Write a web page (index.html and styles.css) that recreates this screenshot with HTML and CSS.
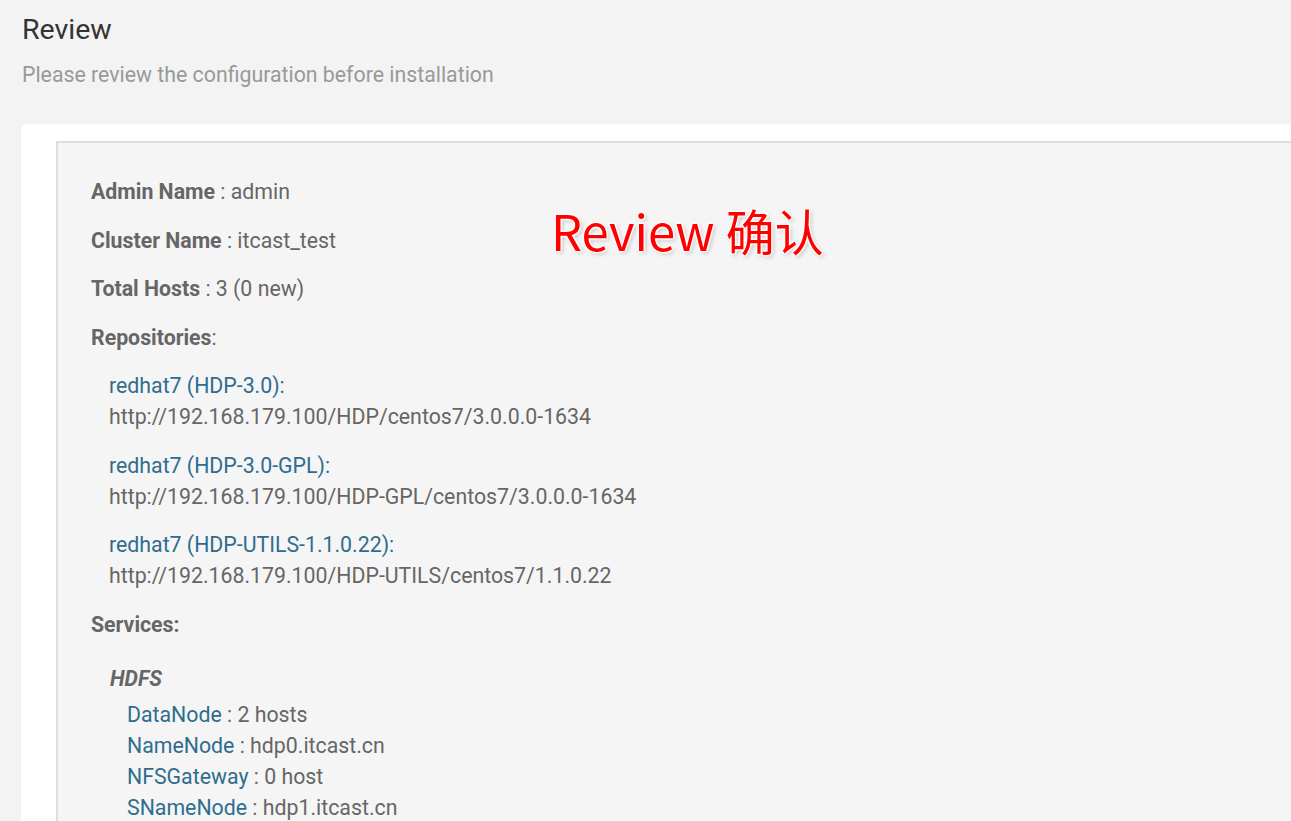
FILE: index.html
```html
<!DOCTYPE html>
<html lang="en">
<head>
<meta charset="utf-8">
<title>Review</title>
<link rel="stylesheet" href="styles.css">
</head>
<body>
<div class="page">
  <h1 class="page-title">Review</h1>
  <p class="page-subtitle">Please review the configuration before installation</p>

  <div class="card">
    <div class="summary">
      <p class="row"><b>Admin Name</b> : admin</p>
      <p class="row"><b>Cluster Name</b> : itcast_test</p>
      <p class="row"><b>Total Hosts</b> : 3 (0 new)</p>
      <p class="row"><b>Repositories</b>:</p>

      <div class="repos">
        <div class="repo">
          <div class="link">redhat7 (HDP-3.0):</div>
          <div>http://192.168.179.100/HDP/centos7/3.0.0.0-1634</div>
        </div>
        <div class="repo">
          <div class="link">redhat7 (HDP-3.0-GPL):</div>
          <div>http://192.168.179.100/HDP-GPL/centos7/3.0.0.0-1634</div>
        </div>
        <div class="repo">
          <div class="link">redhat7 (HDP-UTILS-1.1.0.22):</div>
          <div>http://192.168.179.100/HDP-UTILS/centos7/1.1.0.22</div>
        </div>
      </div>

      <p class="row"><b>Services:</b></p>

      <div class="service">
        <div class="service-name">HDFS</div>
        <ul class="components">
          <li><span class="link">DataNode</span> : 2 hosts</li>
          <li><span class="link">NameNode</span> : hdp0.itcast.cn</li>
          <li><span class="link">NFSGateway</span> : 0 host</li>
          <li><span class="link">SNameNode</span> : hdp1.itcast.cn</li>
        </ul>
      </div>
    </div>
  </div>

  <div class="note">Review 确认</div>
</div>
</body>
</html>
```

FILE: styles.css
```css
html, body {
  margin: 0;
  padding: 0;
  background: #f3f3f3;
  height: 100%;
  overflow: hidden;
}

.page {
  position: relative;
  padding: 12px 0 0 21px;
  font-family: Roboto, "Noto Sans", sans-serif;
  color: #666;
}

.page-title {
  margin: 0 0 0 1px;
  font-size: 28.5px;
  font-weight: 400;
  line-height: 35px;
  color: #333;
}

.page-subtitle {
  margin: 16px 0 0 1px;
  font-size: 21.3px;
  line-height: 24px;
  color: #999;
}

.card {
  margin-top: 37px;
  background: #fff;
  border-top-left-radius: 6px;
  padding: 17px 0 0 35px;
}

.summary {
  background: #f5f5f5;
  border: 2px solid #dedede;
  border-right: none;
  border-bottom: none;
  padding: 33px 0 0 33px;
  font-size: 21.3px;
  line-height: 31px;
  min-height: 800px;
}

.row {
  margin: 0 0 17.5px;
}

.row b {
  font-weight: 700;
}

.link {
  color: #2e6d8e;
}

.repos {
  padding-left: 18px;
}

.repo {
  margin-bottom: 17.5px;
}

.service {
  padding-left: 19px;
}

.service-name {
  margin-top: 23px;
  font-style: italic;
  font-weight: 700;
  line-height: 31px;
}

.components {
  list-style: none;
  margin: 5px 0 0;
  padding-left: 17px;
}

/* annotation over the card */
.note {
  position: absolute;
  left: 551px;
  top: 200px;
  font-family: "Noto Sans CJK SC", "Noto Sans", sans-serif;
  font-size: 49px;
  line-height: 60px;
  color: #f00;
  text-shadow:
    0 0 2px #fff, 1px 1px 2px #fff, -1px -1px 2px #fff,
    1px -1px 2px #fff, -1px 1px 2px #fff, 2px 2px 4px rgba(0,0,0,0.25);
}
```
